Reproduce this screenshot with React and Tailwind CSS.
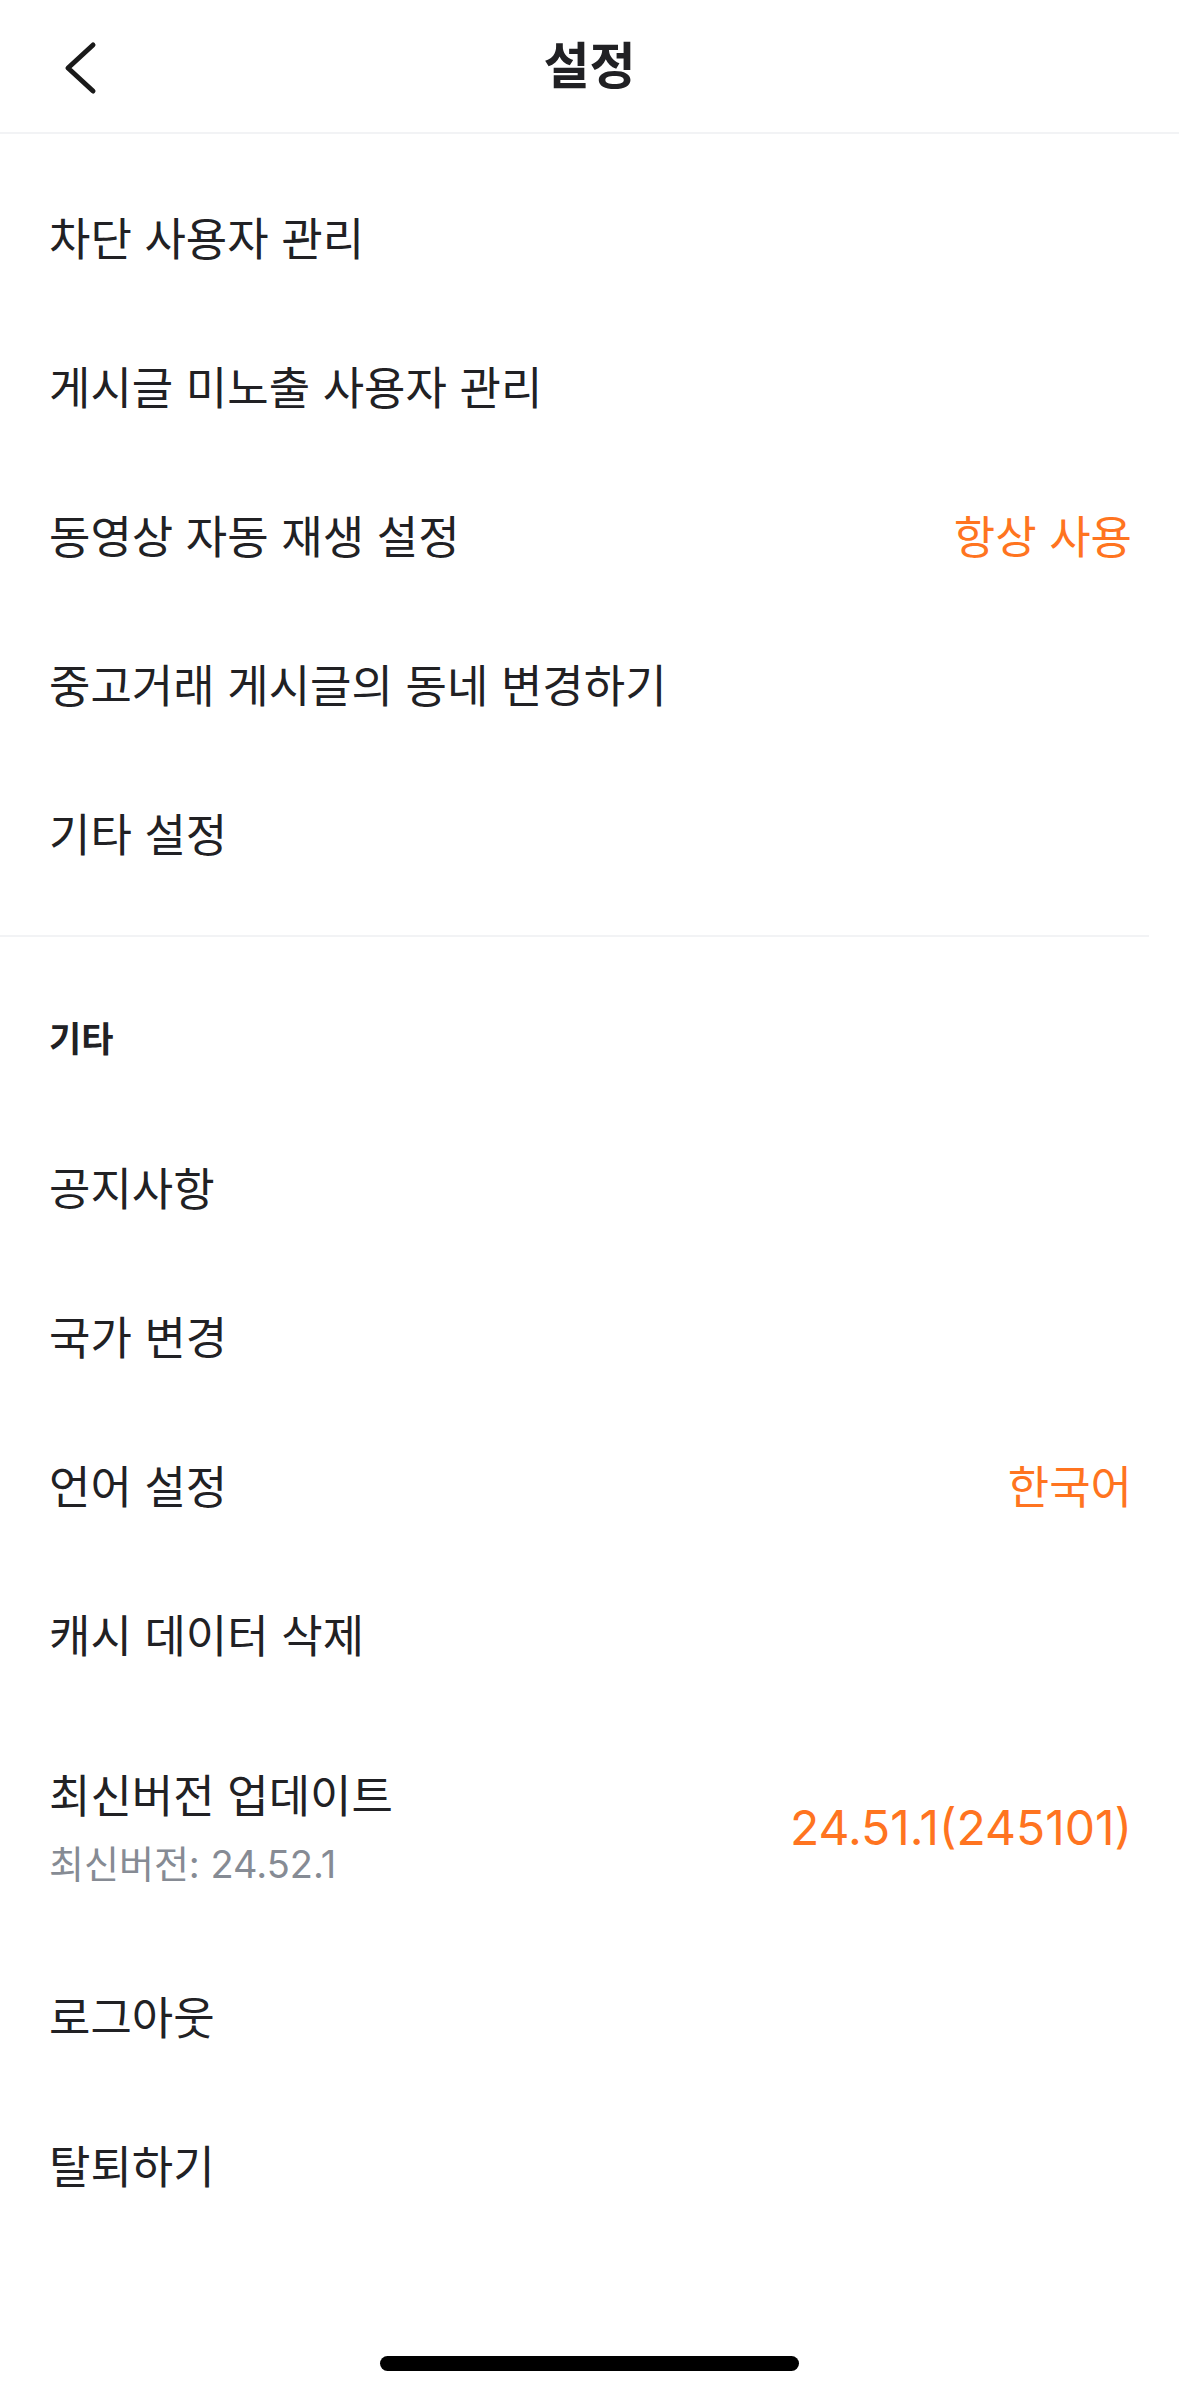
import React from "react";

function Row({ label, value }) {
  return (
    <div className="flex h-[149px] items-center justify-between pl-[49px] pr-[47px]">
      <span className="text-[45px] leading-[56px] text-[#212124]">{label}</span>
      {value ? (
        <span className="text-[45px] leading-[56px] text-[#ff7420]">{value}</span>
      ) : null}
    </div>
  );
}

export default function App() {
  return (
    <div className="flex min-h-[2396px] w-[1179px] flex-col bg-white font-['Inter','Noto_Sans_CJK_KR',sans-serif]">
      <header className="relative flex h-[134px] items-center justify-center border-b-2 border-[#f2f3f5]">
        <button className="absolute left-[52px] top-[30px] flex h-[76px] w-[56px] items-center justify-center">
          <svg width="40" height="60" viewBox="0 0 40 60" fill="none">
            <path d="M33 7 L8 30 L33 53" stroke="#1a1a1a" strokeWidth="5" strokeLinecap="round" strokeLinejoin="round" />
          </svg>
        </button>
        <h1 className="text-[50px] font-bold leading-none text-[#212124]">설정</h1>
      </header>

      <div className="pt-[31px] pb-[25px]">
        <Row label="차단 사용자 관리" />
        <Row label="게시글 미노출 사용자 관리" />
        <Row label="동영상 자동 재생 설정" value="항상 사용" />
        <Row label="중고거래 게시글의 동네 변경하기" />
        <Row label="기타 설정" />
      </div>

      <div className="h-[2px] w-[1149px] bg-[#f2f3f5]" />

      <div className="pl-[49px] pt-[80px] pb-[54px]">
        <span className="block text-[35px] font-bold leading-[44px] text-[#212124]">기타</span>
      </div>

      <Row label="공지사항" />
      <Row label="국가 변경" />
      <Row label="언어 설정" value="한국어" />
      <Row label="캐시 데이터 삭제" />

      <div className="flex h-[233px] items-center justify-between pl-[49px] pr-[47px]">
        <div className="flex flex-col gap-[16px]">
          <span className="text-[45px] leading-[56px] text-[#212124]">최신버전 업데이트</span>
          <span className="text-[38px] leading-[46px] text-[#868b94]">최신버전: 24.52.1</span>
        </div>
        <span className="text-[48px] leading-[56px] text-[#ff7420]">24.51.1(245101)</span>
      </div>

      <Row label="로그아웃" />
      <Row label="탈퇴하기" />

      <div className="flex-1" />
      <div className="flex justify-center pb-[25px]">
        <div className="h-[15px] w-[419px] rounded-full bg-black" />
      </div>
    </div>
  );
}
